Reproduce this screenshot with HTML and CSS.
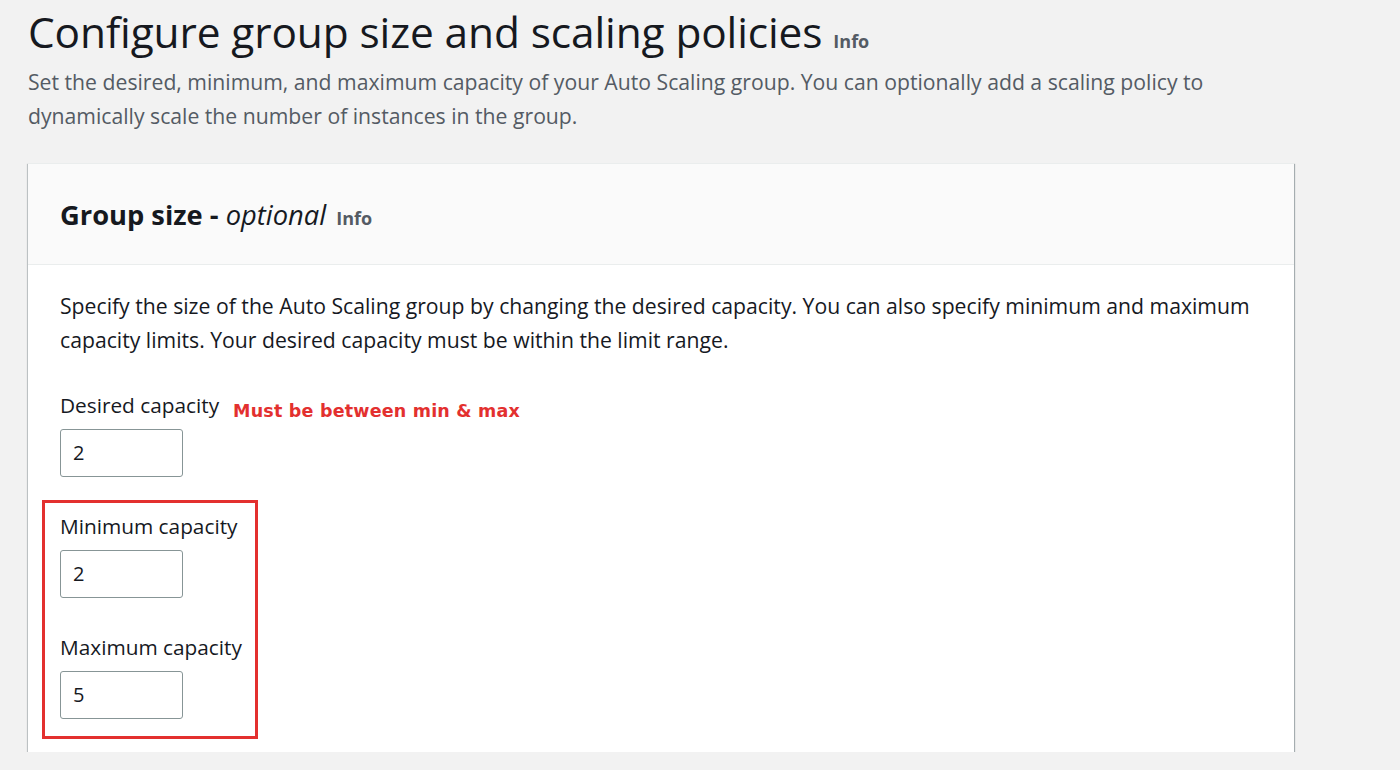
FILE: index.html
```html
<!DOCTYPE html>
<html>
<head>
<meta charset="utf-8">
<link rel="stylesheet" href="styles.css">
</head>
<body>
<div class="page">
  <header class="page-head">
    <h1 class="page-title">Configure group size and scaling policies <span class="info-big">Info</span></h1>
    <p class="page-desc">Set the desired, minimum, and maximum capacity of your Auto Scaling group. You can optionally add a scaling policy to dynamically scale the number of instances in the group.</p>
  </header>
  <section class="card">
    <div class="card-head">
      <h2 class="card-title">Group size - <em>optional</em> <span class="info-small">Info</span></h2>
    </div>
    <div class="card-body">
      <p class="card-desc">Specify the size of the Auto Scaling group by changing the desired capacity. You can also specify minimum and maximum capacity limits. Your desired capacity must be within the limit range.</p>
      <div class="field">
        <div class="label-row"><label class="label">Desired capacity</label><span class="note">Must be between min &amp; max</span></div>
        <div class="input">2</div>
      </div>
      <div class="highlight">
        <div class="field">
          <label class="label">Minimum capacity</label>
          <div class="input">2</div>
        </div>
        <div class="field">
          <label class="label">Maximum capacity</label>
          <div class="input">5</div>
        </div>
      </div>
    </div>
  </section>
</div>
</body>
</html>
```

FILE: styles.css
```css
html, body {
  margin: 0;
  padding: 0;
  background: #f2f2f2;
}
body {
  font-family: "Open Sans", "Noto Sans", sans-serif;
  color: #16191f;
}
.page {
  padding: 6px 0 0 28px;
  width: 1268px;
}
.page-title {
  margin: 0;
  font-size: 42.4px;
  font-weight: 400;
  line-height: 52px;
  letter-spacing: -0.1px;
  color: #16191f;
}
.info-big {
  font-size: 18px;
  font-weight: 700;
  letter-spacing: 0;
  color: #545b64;
}
.page-desc {
  margin: -2px 0 0 0;
  font-size: 21.2px;
  line-height: 34px;
  color: #545b64;
  width: 1230px;
  letter-spacing: 0;
}
.card {
  margin-top: 30px;
  background: #fff;
  border-top: 1px solid #eaeded;
  box-shadow: 0 1px 1px 0 rgba(0,28,36,.5), 1px 1px 1px 0 rgba(0,28,36,.25), -1px 1px 1px 0 rgba(0,28,36,.15);
  width: 1266px;
}
.card-head {
  background: #fafafa;
  border-bottom: 1px solid #eaeded;
  height: 100px;
  display: flex;
  align-items: center;
  padding-left: 32px;
}
.card-title {
  margin: 0;
  font-size: 27.3px;
  font-weight: 700;
  letter-spacing: 0;
}
.card-title em {
  font-weight: 400;
}
.info-small {
  font-size: 18px;
  font-weight: 700;
  color: #545b64;
  margin-left: 3px;
  letter-spacing: 0;
}
.card-body {
  padding: 24px 32px 13px 32px;
}
.card-desc {
  margin: 0;
  font-size: 21.2px;
  line-height: 34px;
  width: 1210px;
  letter-spacing: 0;
}
.field {
  display: flex;
  flex-direction: column;
  align-items: flex-start;
}
.card-desc + .field {
  margin-top: 33px;
}
.label-row {
  display: flex;
  align-items: baseline;
}
.label {
  font-size: 20.8px;
  line-height: 30px;
  letter-spacing: 0;
}
.note {
  margin-left: 14px;
  font-family: "DejaVu Sans", sans-serif;
  font-weight: 700;
  font-size: 17.5px;
  color: #e3302f;
  letter-spacing: 0.2px;
  position: relative;
  top: 4px;
}
.input {
  margin-top: 9px;
  width: 121px;
  height: 46px;
  border: 1px solid #879596;
  border-radius: 3px;
  box-sizing: content-box;
  font-size: 20px;
  line-height: 46px;
  text-indent: 12px;
  background: #fff;
}
.highlight {
  margin: 23px 0 0 -18px;
  width: 216px;
  box-sizing: border-box;
  border: 3px solid #e3302f;
  padding: 8px 0 17px 15px;
  display: flex;
  flex-direction: column;
  gap: 34px;
}
```
